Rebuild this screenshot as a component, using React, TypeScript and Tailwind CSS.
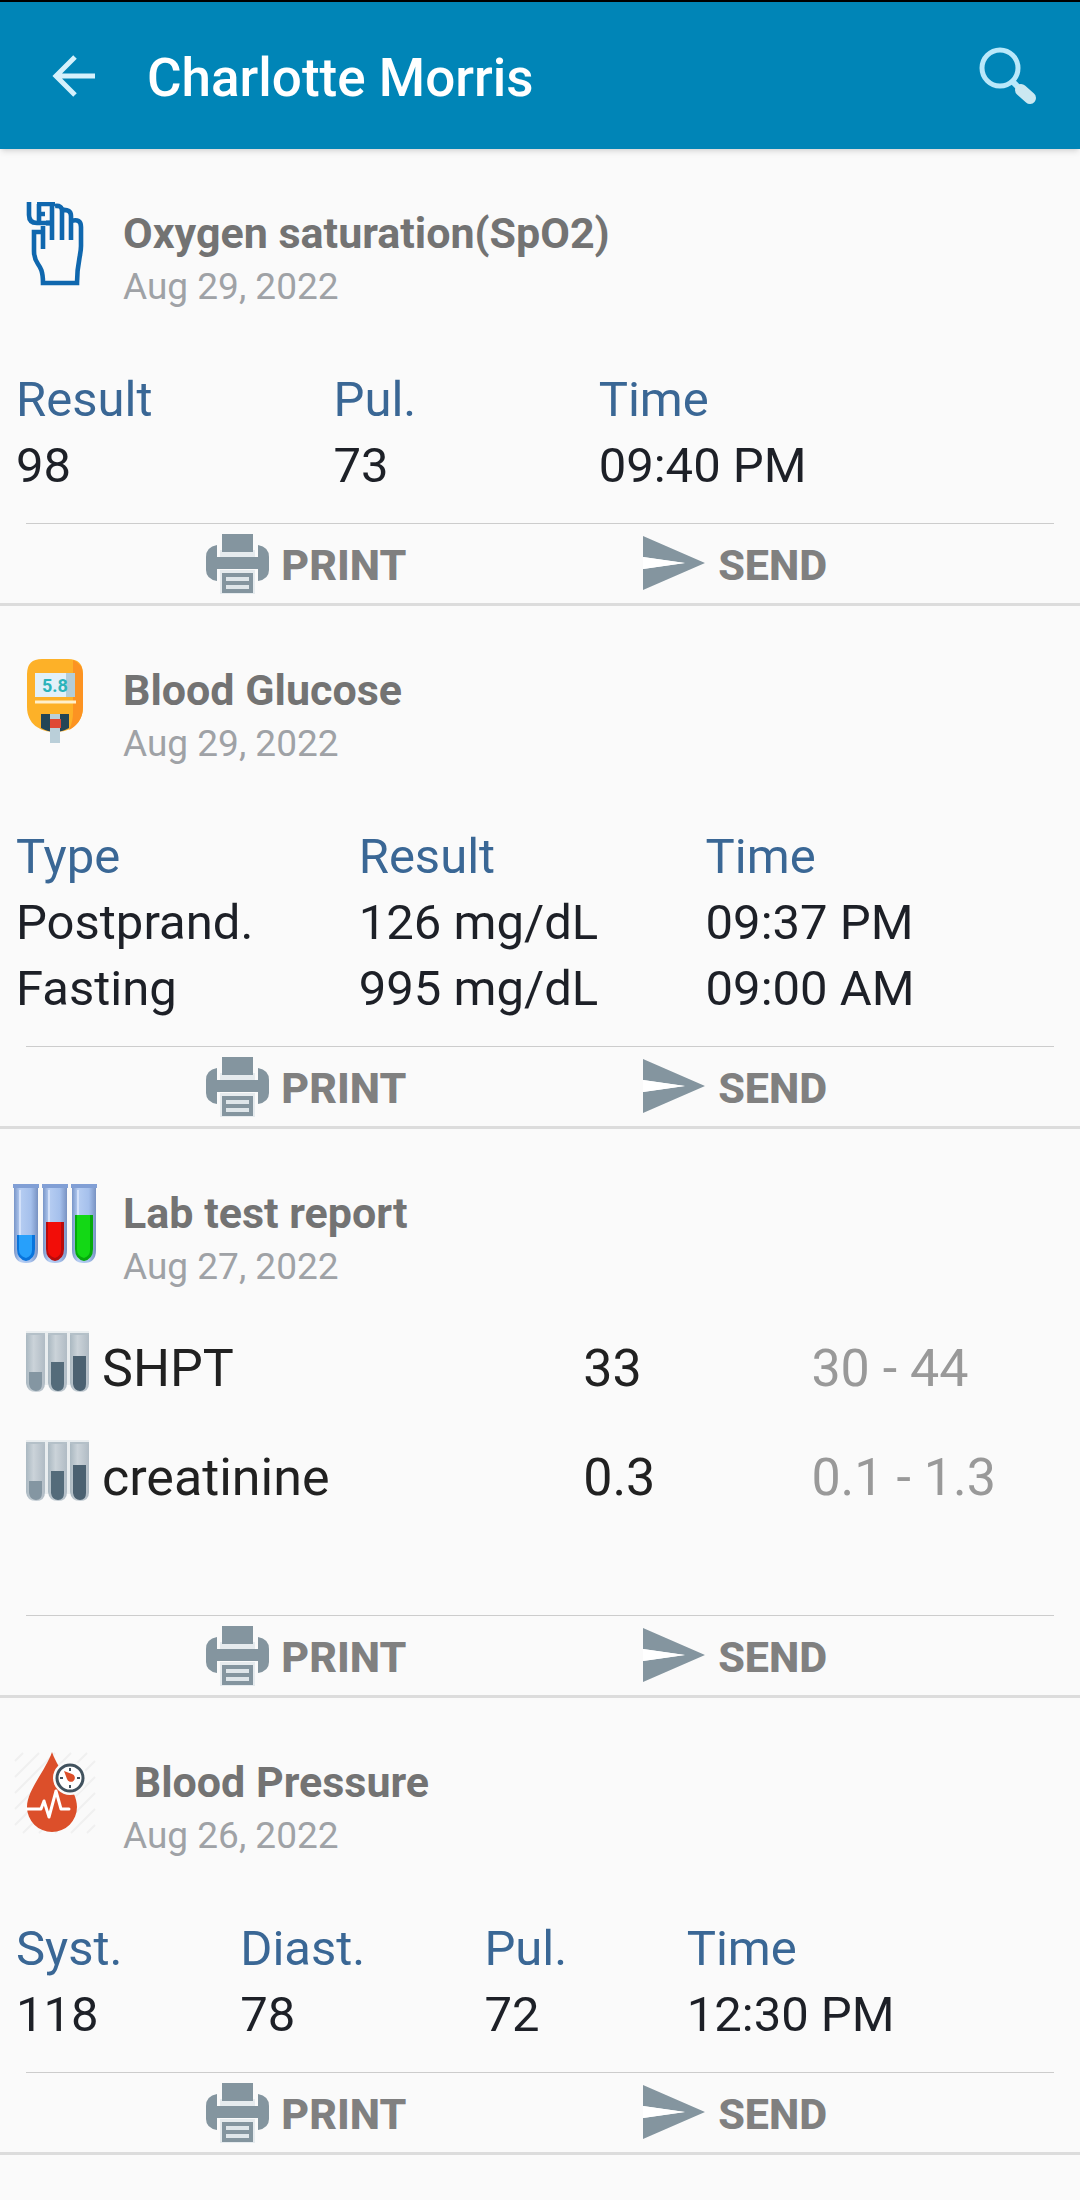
import React from 'react'

interface MeasureProps {
    title: string
    date: string
    icon: React.ReactNode
    children: React.ReactNode
}
interface ReadingsProps {
    label: string
    columns: { name: string; width: string }[]
    rows: string[][]
}

const HandIcon = () => (
    <svg viewBox="0 0 84 84" className="h-[84px] w-[84px]" fill="none" stroke="#0f67ae" strokeWidth="4.6">
        <path d="M16 0v13q0 8 8 8h14" />
        <path d="M24 2h18M26 2v18M27 12h5M39 2v36" />
        <path d="M42 4q7-1 7 5v29M49 8q9-1 9 6v24" />
        <path d="M58 19q10-3 10 6v19c0 10-4 16-4 37H30c0-22-9-16-9-32V30h7M30 24v23" />
        <path d="M33 21h5" strokeWidth="5" />
    </svg>
)

const GlucoseIcon = () => (
    <svg viewBox="0 0 84 84" className="h-[84px] w-[84px]">
        <path d="M29 0h26q15 0 15 15v33c0 17-13 25-28 25S14 65 14 48V15Q14 0 29 0z" fill="#fdb128" />
        <path d="M60 1q10 4 10 14v33c0 13-8 20-14 23 3-6 4-12 4-18z" fill="#fc9322" />
        <path d="M22 14h32v24H22z" fill="#e2f0f8" />
        <path d="M53 14h9v24h-9z" fill="#b4cdd8" />
        <text x="29" y="33" fontFamily="Roboto, sans-serif" fontSize="18" fontWeight="700" fill="#2bb3ba">5.8</text>
        <path d="M22 43h41" stroke="#fff0cc" strokeWidth="3" />
        <path d="M28 55h28v14q-7 4-14 4t-14-4z" fill="#244556" />
        <path d="M37 55h10v29H37z" fill="#bacfd9" />
        <path d="M37 60h11v9H37z" fill="#df4835" />
    </svg>
)

const LabIcon = () => (
    <svg viewBox="0 0 84 84" className="h-[84px] w-[84px]">
        <defs>
            <linearGradient id="glass">
                <stop offset="0" stopColor="#7895c8" />
                <stop offset=".25" stopColor="#b6cdf2" />
                <stop offset=".7" stopColor="#a5c0ec" />
                <stop offset="1" stopColor="#7892c2" />
            </linearGradient>
        </defs>
        {[
            { x: 0, y: 53, light: '#27a0fb', dark: '#0874dc' },
            { x: 29, y: 40, light: '#f20d08', dark: '#b90b0b' },
            { x: 58, y: 33, light: '#13d815', dark: '#05aa0b' },
        ].map((tube) => (
            <g key={tube.x} transform={`translate(${tube.x} 0)`}>
                <path d="M1 5h24v63q0 13-12 13T1 68z" fill="url(#glass)" />
                <path d="M0 2h26v4H0z" fill="#819fd5" />
                <path d="M7 8v58" stroke="#d3e1fa" strokeWidth="2" />
                <path d={`M4 ${tube.y}h18V67q0 10-9 12-9-2-9-12z`} fill={tube.dark} />
                <path d={`M6 ${tube.y}h13V68q0 6-6 8-7-2-7-8z`} fill={tube.light} />
            </g>
        ))}
    </svg>
)

const PressureIcon = () => (
    <svg viewBox="0 0 84 84" className="h-[84px] w-[84px]">
        <path d="M2 10 10 2M2 26 26 2M2 42 42 2M2 58 58 2M2 74 74 2M10 82 82 10M26 82l56-56M42 82l40-40M58 82l24-24M74 82l8-8" stroke="#f0f0f0" strokeWidth="2" />
        <path d="M39 1c6 18 25 38 25 55a25 25 0 0 1-50 0C14 39 33 19 39 1z" fill="#dc4f2a" />
        <path d="M14 58h14l3-8 5 16 7-26 5 18h8" fill="none" stroke="#fff" strokeWidth="3" strokeLinejoin="round" strokeLinecap="round" />
        <circle cx="57" cy="27" r="17" fill="#fafafa" />
        <circle cx="57" cy="27" r="13" fill="#fff" stroke="#41525e" strokeWidth="3" />
        <path d="M57 17v3M57 34v3M47 27h3M64 27h3" stroke="#41525e" strokeWidth="2" />
        <path d="m51 20 8 3a4 4 0 1 1-5 5z" fill="#dc4f2a" />
    </svg>
)

const GrayTubesIcon = () => (
    <svg viewBox="0 0 63 63" className="h-[63px] w-[63px]">
        <defs>
            <linearGradient id="grayGlass">
                <stop offset="0" stopColor="#aab8c1" />
                <stop offset=".4" stopColor="#cbd3d9" />
                <stop offset="1" stopColor="#b0bbc4" />
            </linearGradient>
        </defs>
        <path d="M0 0h63v54H0z" fill="#e9edef" />
        {[
            { x: 0, y: 41, color: '#8496a2' },
            { x: 22, y: 31, color: '#546b7a' },
            { x: 44, y: 25, color: '#4b6171' },
        ].map((tube) => (
            <g key={tube.x} transform={`translate(${tube.x} 0)`}>
                <path d="M0 2h19v50q0 9-9 9t-10-9z" fill="url(#grayGlass)" />
                <path d="M0 2h19v2H0z" fill="#b4c0c8" />
                <path d={`M3 ${tube.y}h13V53q0 7-6 7t-7-7z`} fill={tube.color} />
            </g>
        ))}
    </svg>
)

const PrinterIcon = () => (
    <svg viewBox="0 0 63 63" className="h-[63px] w-[63px]">
        <path d="M14 18h35v8H14zM14 38h35v24H14z" fill="#e6ebee" />
        <path d="M16 2h31v18H16z" fill="#84959f" />
        <path d="M11 13v12h41V13q11 2 11 12v13q0 9-11 11V37H11v12Q0 47 0 38V25q0-10 11-12z" fill="#84959f" />
        <path d="M16 41h31v20H16z" fill="#84959f" />
        <path d="M20 45h23v4H20zM20 53h23v4H20z" fill="#dfe6ea" />
    </svg>
)

const SendIcon = () => (
    <svg viewBox="0 0 63 63" className="h-[63px] w-[63px]">
        <path d="M0 4 62 31 0 58V37l42-6L0 25z" fill="#84959f" />
        <path d="M0 25 42 31 0 37z" fill="#fff" />
    </svg>
)

const Measure = ({ title, date, icon, children }: MeasureProps) => (
    <section className="border-b-3 border-[#dcdcdc]">
        <div className="flex gap-[26px] px-[13px] pt-[53px]">
            {icon}
            <div className="pt-[5px]">
                <h2 className="text-[43px] leading-[52px] font-bold whitespace-pre text-[#737373]">{title}</h2>
                <p className="text-[37px] leading-[56px] text-[#9fa2a6]">{date}</p>
            </div>
        </div>
        {children}
        <div className="mx-[26px] border-t border-[#cccccc]" />
        <div className="flex pt-2 pb-1 pl-[19.1%]">
            <div className="w-1/2">
                <button className="flex items-start gap-3 text-[43px] leading-[67px] font-extrabold text-[#808080]">
                    <PrinterIcon />
                    PRINT
                </button>
            </div>
            <button className="flex items-start gap-3 text-[43px] leading-[67px] font-extrabold text-[#808080]">
                <SendIcon />
                SEND
            </button>
        </div>
    </section>
)

const Readings = ({ label, columns, rows }: ReadingsProps) => (
    <div className="px-4 pt-[52px] pb-6">
        <table aria-label={label} className="w-full table-fixed text-left text-[49px] leading-[66px]">
            <thead>
                <tr className="text-[#3a6795]">
                    {columns.map((column) => (
                        <th key={column.name} className={`p-0 font-normal ${column.width}`}>{column.name}</th>
                    ))}
                </tr>
            </thead>
            <tbody className="text-[#1d2027]">
                {rows.map((row) => (
                    <tr key={row.join()}>
                        {row.map((cell) => (
                            <td key={cell} className="p-0">{cell}</td>
                        ))}
                    </tr>
                ))}
            </tbody>
        </table>
    </div>
)

const labTests = [
    { name: 'SHPT', value: '33', range: '30 - 44' },
    { name: 'creatinine', value: '0.3', range: '0.1 - 1.3' },
]

export default function App() {
    return (
        <div className="min-h-screen bg-[#fafafa] font-[Roboto,sans-serif]">
            <header className="flex h-[149px] items-center border-t-2 border-black bg-[#0085b7] pr-[42px] pl-[52px] shadow-md">
                <button aria-label="Back">
                    <svg viewBox="0 0 44 44" className="h-[44px] w-[44px]" fill="none" stroke="#d5f1fc" strokeWidth="5">
                        <path d="M23 3 4 22l19 19M4 22h39" />
                    </svg>
                </button>
                <h1 className="ml-[51px] grow pt-1 text-[53px] leading-[64px] font-medium text-white">Charlotte Morris</h1>
                <button aria-label="Search">
                    <svg viewBox="0 0 60 60" className="h-[60px] w-[60px]">
                        <circle cx="22" cy="22" r="18" fill="none" stroke="#b9e8fa" strokeWidth="5" />
                        <path d="m34 35 8 8" stroke="#b9e8fa" strokeWidth="6" />
                        <path d="m43 44 9 8" stroke="#cbe8f1" strokeWidth="12" strokeLinejoin="round" strokeLinecap="round" />
                    </svg>
                </button>
            </header>
            <main>
                <Measure title="Oxygen saturation(SpO2)" date="Aug 29, 2022" icon={<HandIcon />}>
                    <Readings
                        label="Oxygen saturation"
                        columns={[
                            { name: 'Result', width: 'w-[30.3%]' },
                            { name: 'Pul.', width: 'w-[25.3%]' },
                            { name: 'Time', width: 'w-auto' },
                        ]}
                        rows={[['98', '73', '09:40 PM']]}
                    />
                </Measure>
                <Measure title="Blood Glucose" date="Aug 29, 2022" icon={<GlucoseIcon />}>
                    <Readings
                        label="Blood glucose"
                        columns={[
                            { name: 'Type', width: 'w-[32.7%]' },
                            { name: 'Result', width: 'w-[33.1%]' },
                            { name: 'Time', width: 'w-auto' },
                        ]}
                        rows={[
                            ['Postprand.', '126 mg/dL', '09:37 PM'],
                            ['Fasting', '995 mg/dL', '09:00 AM'],
                        ]}
                    />
                </Measure>
                <Measure title="Lab test report" date="Aug 27, 2022" icon={<LabIcon />}>
                    <div className="px-[26px] pt-[13px] pb-[89px]">
                        <table aria-label="Lab tests" className="w-full table-fixed text-left text-[52px] leading-[75px] text-[#212121]">
                            <tbody>
                                {labTests.map((test) => (
                                    <tr key={test.name} className="h-[109px] align-top">
                                        <th className="w-[54.2%] p-0 pt-[23px] font-normal">
                                            <div className="flex items-start gap-[13px]">
                                                <GrayTubesIcon />
                                                {test.name}
                                            </div>
                                        </th>
                                        <td className="w-[22.2%] p-0 pt-[23px]">{test.value}</td>
                                        <td className="p-0 pt-[23px] text-[#999999]">{test.range}</td>
                                    </tr>
                                ))}
                            </tbody>
                        </table>
                    </div>
                </Measure>
                <Measure title=" Blood Pressure" date="Aug 26, 2022" icon={<PressureIcon />}>
                    <Readings
                        label="Blood pressure"
                        columns={[
                            { name: 'Syst.', width: 'w-[21.4%]' },
                            { name: 'Diast.', width: 'w-[23.3%]' },
                            { name: 'Pul.', width: 'w-[19.3%]' },
                            { name: 'Time', width: 'w-auto' },
                        ]}
                        rows={[['118', '78', '72', '12:30 PM']]}
                    />
                </Measure>
            </main>
        </div>
    )
}
